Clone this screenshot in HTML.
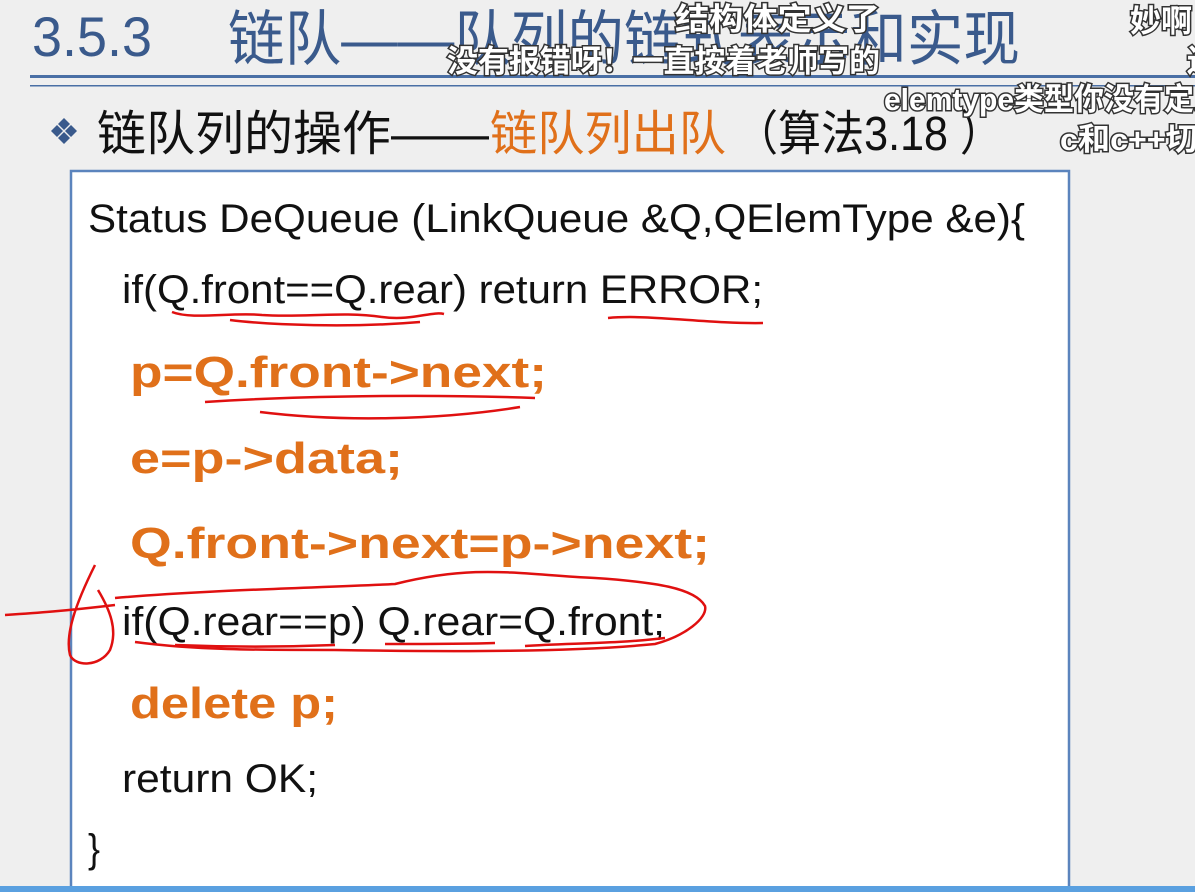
<!DOCTYPE html>
<html><head><meta charset="utf-8"><style>
body{margin:0;width:1195px;height:892px;overflow:hidden;background:#efefef;}
svg{display:block}
.d{font-family:"Liberation Sans","Noto Sans CJK SC",sans-serif;fill:#fff;stroke:#333;stroke-width:3;paint-order:stroke;font-weight:bold;font-size:31px}
</style></head><body>
<svg width="1195" height="892" xmlns="http://www.w3.org/2000/svg">
<rect width="1195" height="892" fill="#efefef"/>
<text x="32" y="56" font-family="Liberation Sans, sans-serif" font-size="56" fill="#3a5a8c" textLength="120" lengthAdjust="spacingAndGlyphs">3.5.3</text>
<text x="228" y="60" font-family="Liberation Sans, Noto Sans CJK SC, sans-serif" font-size="60" fill="#3a5a8c" textLength="792" lengthAdjust="spacingAndGlyphs">链队——队列的链式表示和实现</text>
<rect x="30" y="75" width="1165" height="3" fill="#4a6fa5"/>
<rect x="30" y="85" width="1165" height="1.5" fill="#4a6fa5"/>
<g fill="#3a5a8c"><path d="M64 118l6 6-6 6-6-6z"/><path d="M64 132l6 6-6 6-6-6z"/><path d="M57 125l6 6-6 6-6-6z"/><path d="M71 125l6 6-6 6-6-6z"/></g>
<text x="97" y="150" font-family="Liberation Sans, Noto Sans CJK SC, sans-serif" font-size="48" fill="#111" textLength="392" lengthAdjust="spacingAndGlyphs">链队列的操作——</text>
<text x="490" y="150" font-family="Liberation Sans, Noto Sans CJK SC, sans-serif" font-size="48" fill="#e0701a" textLength="236" lengthAdjust="spacingAndGlyphs">链队列出队</text>
<text x="735" y="150" font-family="Liberation Sans, Noto Sans CJK SC, sans-serif" font-size="48" fill="#111" textLength="268" lengthAdjust="spacingAndGlyphs">（算法3.18 ）</text>
<rect x="71" y="171" width="998" height="720" fill="#fff" stroke="#5b84bd" stroke-width="2.5"/>
<rect x="0" y="886" width="1195" height="6" fill="#5aa0e0"/>
<g font-family="Liberation Sans, sans-serif" font-size="40" fill="#111">
<text x="88" y="232" textLength="937" lengthAdjust="spacingAndGlyphs">Status DeQueue (LinkQueue &amp;Q,QElemType &amp;e){</text>
<text x="122" y="303" textLength="641" lengthAdjust="spacingAndGlyphs">if(Q.front==Q.rear) return ERROR;</text>
<text x="122" y="635" textLength="543" lengthAdjust="spacingAndGlyphs">if(Q.rear==p) Q.rear=Q.front;</text>
<text x="122" y="792" textLength="196" lengthAdjust="spacingAndGlyphs">return OK;</text>
<text x="88" y="862" textLength="12" lengthAdjust="spacingAndGlyphs">}</text>
</g>
<g font-family="Liberation Sans, sans-serif" font-size="44" font-weight="bold" fill="#e0701a">
<text x="130" y="387" textLength="417" lengthAdjust="spacingAndGlyphs">p=Q.front-&gt;next;</text>
<text x="130" y="473" textLength="273" lengthAdjust="spacingAndGlyphs">e=p-&gt;data;</text>
<text x="130" y="558" textLength="580" lengthAdjust="spacingAndGlyphs">Q.front-&gt;next=p-&gt;next;</text>
<text x="130" y="718" textLength="208" lengthAdjust="spacingAndGlyphs">delete p;</text>
</g>
<g fill="none" stroke="#e01010" stroke-width="2.5">
<path d="M172 312c20 8 60 0 90 3 40 3 80 -4 120 2 30 4 50 -6 62 -3M230 320c40 5 120 8 190 2"/>
<path d="M608 318c40 -4 100 6 155 5"/>
<path d="M205 402c90 -6 220 -8 330 -4M260 412c80 10 180 8 260 -5"/>
<path d="M5 615c30 -2 60 -4 110 -10M95 565c-20 40 -30 70 -25 90 5 12 30 12 40 -5 8 -20 0 -40 -12 -60M115 598c90 -8 200 -10 280 -14 80 -20 120 -10 200 -6 60 4 100 10 110 28 3 12 -20 30 -50 38 -80 8 -200 8 -320 6 -80 0 -140 0 -200 -8"/>
<path d="M175 645c50 2 110 2 160 0M385 644c40 0 80 0 110 -1M525 646c40 -3 90 -2 140 -8"/>
</g>
<text class="d" x="675" y="30" textLength="205" lengthAdjust="spacingAndGlyphs">结构体定义了</text>
<text class="d" x="447" y="72" textLength="433" lengthAdjust="spacingAndGlyphs">没有报错呀！一直按着老师写的</text>
<text class="d" x="1130" y="32">妙啊</text>
<text class="d" x="1187" y="72">还</text>
<text class="d" x="884" y="110" textLength="340" lengthAdjust="spacingAndGlyphs">elemtype类型你没有定义</text>
<text class="d" x="1060" y="150" textLength="170" lengthAdjust="spacingAndGlyphs">c和c++切换</text>
</svg>
</body></html>
